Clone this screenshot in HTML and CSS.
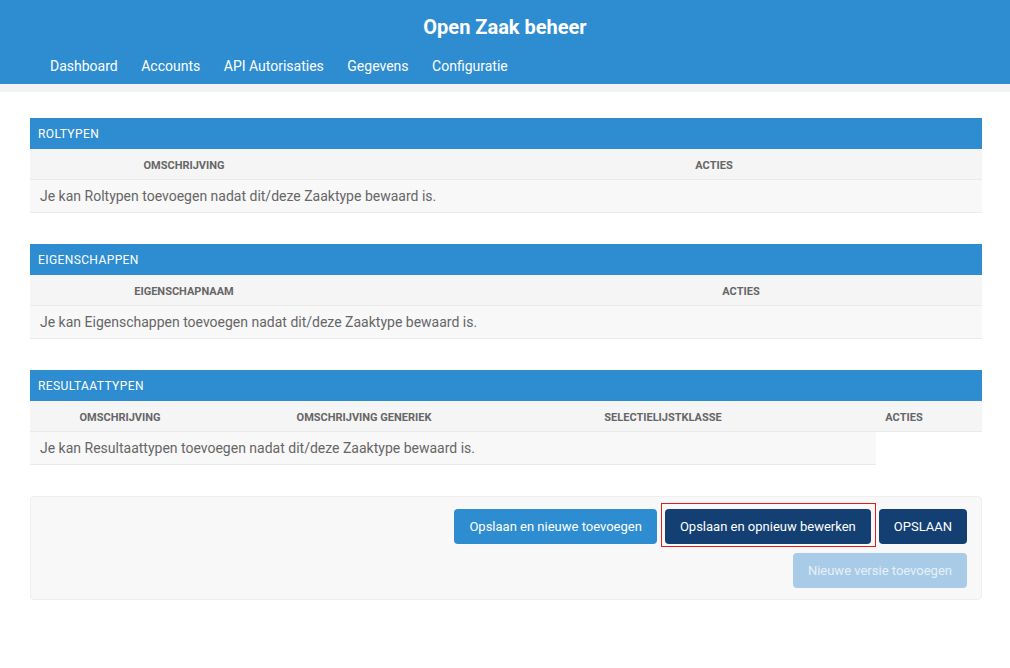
FILE: index.html
```html
<!DOCTYPE html>
<html lang="nl">
<head>
    <meta charset="UTF-8">
    <title>Zaaktype toevoegen | Open Zaak beheer</title>
    <link rel="stylesheet" href="styles.css">
</head>
<body>
    <!-- Header -->
    <div id="header">
        <div class="branding">Open Zaak beheer</div>
        <ul class="nav">
            <li><a href="#">Dashboard</a></li>
            <li><a href="#">Accounts</a></li>
            <li><a href="#">API Autorisaties</a></li>
            <li><a href="#">Gegevens</a></li>
            <li><a href="#">Configuratie</a></li>
        </ul>
    </div>
    <div class="breadcrumbs"></div>

    <!-- Content -->
    <div id="content">
        <div class="module">
            <div class="caption">Roltypen</div>
            <div class="row head cols-2">
                <div class="th th-first">Omschrijving</div>
                <div class="th th-acties-a">Acties</div>
            </div>
            <div class="row body">
                <div class="td">Je kan Roltypen toevoegen nadat dit/deze Zaaktype bewaard is.</div>
            </div>
        </div>

        <div class="module">
            <div class="caption">Eigenschappen</div>
            <div class="row head cols-2">
                <div class="th th-first">Eigenschapnaam</div>
                <div class="th th-acties-b">Acties</div>
            </div>
            <div class="row body">
                <div class="td">Je kan Eigenschappen toevoegen nadat dit/deze Zaaktype bewaard is.</div>
            </div>
        </div>

        <div class="module">
            <div class="caption">Resultaattypen</div>
            <div class="row head cols-4">
                <div class="th">Omschrijving</div>
                <div class="th">Omschrijving generiek</div>
                <div class="th th-klasse">Selectielijstklasse</div>
                <div class="th th-acties-c">Acties</div>
            </div>
            <div class="row body body-short">
                <div class="td">Je kan Resultaattypen toevoegen nadat dit/deze Zaaktype bewaard is.</div>
            </div>
        </div>

        <!-- Submit -->
        <div class="submit-row">
            <div class="buttons">
                <button class="btn btn-light">Opslaan en nieuwe toevoegen</button>
                <button class="btn btn-dark btn-marked">Opslaan en opnieuw bewerken</button>
                <button class="btn btn-dark">OPSLAAN</button>
            </div>
            <div class="buttons">
                <button class="btn btn-disabled" disabled>Nieuwe versie toevoegen</button>
            </div>
        </div>
    </div>
</body>
</html>
```

FILE: styles.css
```css
/* Base */
*, *::before, *::after {
    box-sizing: border-box;
    margin: 0;
    padding: 0;
}

body {
    font-family: Roboto, "Liberation Sans", Arial, sans-serif;
    background: white;
    color: #666;
    font-size: 14px;
}

/* Header */
#header {
    background: #2e8dd1;
    height: 84px;
    color: white;
}

.branding {
    text-align: center;
    font-size: 20px;
    font-weight: bold;
    padding-top: 14px;
    line-height: 26px;
}

.nav {
    list-style: none;
    display: flex;
    gap: 23.5px;
    padding: 16px 0 0 50px;
    line-height: 20px;
}

.nav a {
    color: white;
    text-decoration: none;
    font-size: 14px;
}

.breadcrumbs {
    height: 8px;
    background: #f3f3f3;
}

/* Content */
#content {
    padding: 26px 28px 0 30px;
}

.module {
    margin-bottom: 31px;
}

.caption {
    background: #2e8dd1;
    color: white;
    text-transform: uppercase;
    font-size: 12px;
    letter-spacing: 0.4px;
    height: 31px;
    line-height: 29px;
    padding: 2px 0 0 8px;
}

.row {
    display: grid;
    border-bottom: 1px solid #eaeaea;
}

.head {
    background: #f5f5f5;
    height: 31px;
    align-items: center;
}

.cols-2 {
    grid-template-columns: 308px 1fr;
}

.cols-4 {
    grid-template-columns: 180px 308px 358px 1fr;
}

.th {
    text-align: center;
    text-transform: uppercase;
    font-size: 11px;
    font-weight: bold;
    color: #666;
    padding-top: 2px;
}

.th-acties-a { padding-left: 108px; }
.th-acties-b { padding-left: 162px; }
.th-klasse { padding-right: 68px; }
.th-acties-c { padding-right: 50px; }

.body {
    background: #f8f8f8;
    height: 33px;
    align-items: center;
}

.body-short {
    width: 846px;
}

.td {
    padding-left: 10px;
    color: #666;
}

/* Submit row */
.submit-row {
    background: #f8f8f8;
    border: 1px solid #eee;
    border-radius: 4px;
    padding: 12px 14px 11px;
    display: flex;
    flex-direction: column;
    gap: 9px;
}

.buttons {
    display: flex;
    justify-content: flex-end;
    gap: 8px;
}

.btn {
    font-family: Roboto, "Liberation Sans", Arial, sans-serif;
    font-size: 13px;
    height: 35px;
    padding: 0 15px;
    border: none;
    border-radius: 4px;
    color: white;
}

.btn-light {
    background: #2e8dd1;
}

.btn-dark {
    background: #133f73;
}

.btn-disabled {
    background: #a8cbe8;
    color: #e6f0f8;
}

.btn-marked {
    position: relative;
}

.btn-marked::after {
    content: "";
    position: absolute;
    top: -6px;
    left: -4px;
    right: -5px;
    bottom: -3px;
    border: 1px solid #e21b1b;
}
```
